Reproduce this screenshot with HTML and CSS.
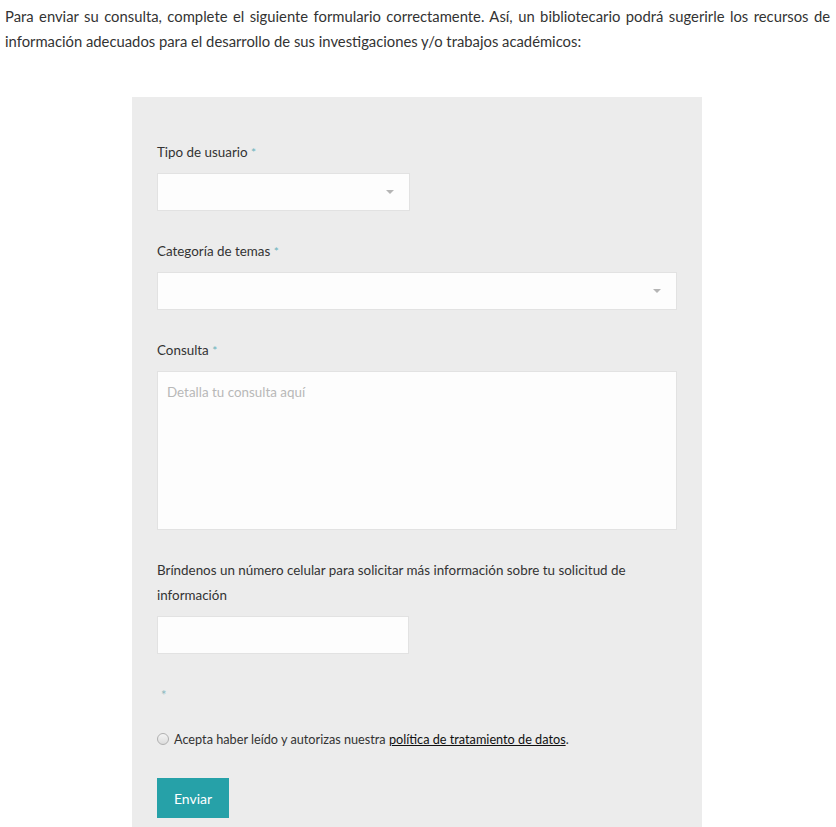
FILE: index.html
```html
<!DOCTYPE html>
<html lang="es">
<head>
<meta charset="utf-8">
<link rel="stylesheet" href="styles.css">
</head>
<body>
<p class="intro">Para enviar su consulta, complete el siguiente formulario correctamente. Así, un bibliotecario podrá sugerirle los recursos de información adecuados para el desarrollo de sus investigaciones y/o trabajos académicos:</p>
<div class="panel">
  <div class="field">
    <div class="label">Tipo de usuario <span class="req">*</span></div>
    <div class="select short"><span class="arrow"></span></div>
  </div>
  <div class="field">
    <div class="label">Categoría de temas <span class="req">*</span></div>
    <div class="select"><span class="arrow"></span></div>
  </div>
  <div class="field">
    <div class="label">Consulta <span class="req">*</span></div>
    <div class="textarea">Detalla tu consulta aquí</div>
  </div>
  <div class="field">
    <div class="label">Bríndenos un número celular para solicitar más información sobre tu solicitud de información</div>
    <div class="input short"></div>
  </div>
  <div class="star">*</div>
  <div class="check">
    <span class="radio"></span>
    <span>Acepta haber leído y autorizas nuestra <a href="#" class="link">política de tratamiento de datos</a>.</span>
  </div>
  <div class="btn">Enviar</div>
</div>
</body>
</html>
```
FILE: styles.css
```css
html, body { margin: 0; padding: 0; background: #fff; }
body {
  font-family: Lato, "Open Sans", sans-serif;
  color: #333;
  font-size: 13.4px;
  height: 827px;
  overflow: hidden;
}
.intro {
  margin: 0;
  padding: 4px 6px 0 5px;
  line-height: 25px;
  text-align: justify;
  font-size: 14.8px;
  color: #333;
}
.panel {
  margin: 43px 0 0 132px;
  width: 520px;
  padding: 43px 25px 20px;
  background: #ececec;
  height: 700px;
}
.field { margin-bottom: 28px; }
.label {
  line-height: 25px;
  margin-bottom: 8px;
  color: #333;
}
.req { color: #6ab3bd; font-size: 12px; }
.select, .input, .textarea {
  box-sizing: border-box;
  background: #fdfdfd;
  border: 1px solid #e2e2e2;
  height: 38px;
  position: relative;
}
.short { width: 253px; }
.input.short { width: 252px; }
.arrow {
  position: absolute;
  right: 15px;
  top: 16px;
  width: 0; height: 0;
  border-left: 4px solid transparent;
  border-right: 4px solid transparent;
  border-top: 4px solid #b5b5b5;
}
.textarea {
  height: 159px;
  padding: 10px 9px;
  color: #b8b8b8;
  line-height: 20px;
}
.star {
  color: #8ab9c0;
  font-size: 13px;
  padding: 3px 0 0 4px;
  line-height: 20px;
}
.check {
  display: flex;
  align-items: center;
  gap: 5px;
  margin-top: 24px;
  font-size: 12.7px;
  line-height: 20px;
}
.radio {
  width: 12px; height: 12px;
  border-radius: 50%;
  border: 1px solid #b0b0b0;
  background: linear-gradient(#f4f4f4, #dcdcdc);
  box-sizing: border-box;
}
.link { color: #111; text-decoration: underline; }
.btn {
  margin-top: 29px;
  width: 72px;
  height: 40px;
  background: #26a1a8;
  color: #fff;
  display: flex;
  align-items: center;
  justify-content: center;
  font-size: 14px;
}
```
